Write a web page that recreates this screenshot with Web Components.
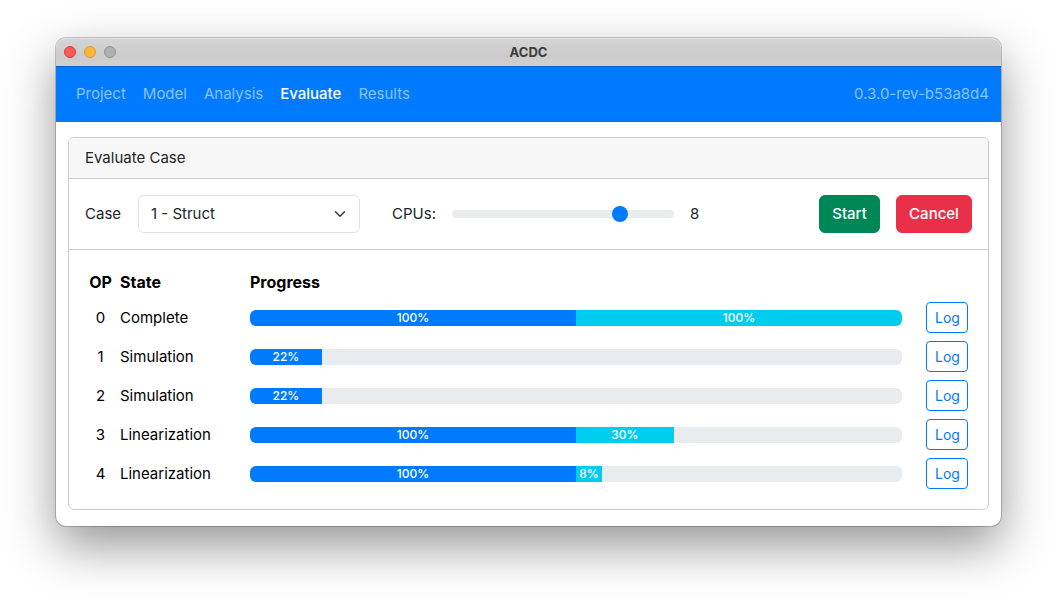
<!DOCTYPE html>
<html lang="en">
<head>
<meta charset="utf-8">
<meta name="viewport" content="width=device-width, initial-scale=1">
<title>ACDC</title>
<style>
  :root {
    --blue: #007aff;
    --cyan: #00ccf0;
    --green: #008757;
    --red: #ea3049;
    --track: #e8ecef;
    --line: #cbcbcb;
    --ink: #212529;
  }
  * { box-sizing: border-box; }
  body {
    margin: 0;
    padding: 38px 56px 72px;
    background: #fff;
    color: var(--ink);
    font: 15px/24px Inter, "Liberation Sans", sans-serif;
  }
</style>
</head>
<body>
<app-window heading="ACDC">
  <nav-bar version="0.3.0-rev-b53a8d4">
    <nav-item>Project</nav-item>
    <nav-item>Model</nav-item>
    <nav-item>Analysis</nav-item>
    <nav-item active>Evaluate</nav-item>
    <nav-item>Results</nav-item>
  </nav-bar>
  <app-card>
    <span slot="header">Evaluate Case</span>
    <case-form slot="controls"></case-form>
    <op-table></op-table>
  </app-card>
</app-window>

<script>
  const define = (name, html, setup) => {
    const template = document.createElement('template');
    template.innerHTML = '<style>*{box-sizing:border-box}</style>' + html;
    customElements.define(name, class extends HTMLElement {
      connectedCallback() {
        if (this.shadowRoot) return;
        const root = this.attachShadow({ mode: 'open' });
        root.append(template.content.cloneNode(true));
        if (setup) setup(this, root);
      }
    });
  };

  define('app-window', `
    <style>
      :host {
        display: block;
        border-radius: 10px;
        background: #fff;
        box-shadow: 0 0 0 1px rgba(0,0,0,.2), 0 20px 50px rgba(0,0,0,.42);
      }
      header {
        display: grid;
        grid-template-columns: 1fr auto 1fr;
        align-items: center;
        height: 28px;
        padding: 0 8px;
        border-radius: 10px 10px 0 0;
        background: linear-gradient(#d5d5d5, #cbcbcb 60%, #d0d0d0);
        box-shadow: inset 0 1px #e2e2e2;
      }
      .lights { display: flex; gap: 8px; }
      .lights button {
        width: 12px; height: 12px; padding: 0;
        border: 1px solid #e0383e; border-radius: 50%;
        background: #ff5a5a;
      }
      .lights .min { background: #ffb43c; border-color: #e09a2b; }
      .lights .max { background: #b0b0b0; border-color: #929292; }
      h1 { margin: 0; font-size: 13px; line-height: 16px; font-weight: 700; color: #3c3c3c; }
      main { padding: 15px 12px 16px; }
    </style>
    <header>
      <div class="lights">
        <button aria-label="Close"></button>
        <button class="min" aria-label="Minimize"></button>
        <button class="max" aria-label="Zoom" disabled></button>
      </div>
      <h1></h1>
    </header>
    <slot name="nav"></slot>
    <main><slot></slot></main>`,
    (host, root) => {
      root.querySelector('h1').textContent = host.getAttribute('heading');
      host.querySelector('nav-bar').slot = 'nav';
    });

  define('nav-bar', `
    <style>
      :host { display: block; }
      nav {
        display: flex; align-items: center; justify-content: space-between;
        height: 56px; padding: 0 12px;
        background: var(--blue);
        box-shadow: inset 0 1px #0060cf;
        color: #8cc2ff;
      }
      .items { display: flex; gap: 1px; }
    </style>
    <nav><div class="items"><slot></slot></div><span class="version"></span></nav>`,
    (host, root) => { root.querySelector('.version').textContent = host.getAttribute('version'); });

  define('nav-item', `
    <style>
      :host { display: block; }
      a { display: block; padding: 8px; color: #8cc2ff; text-decoration: none; }
      :host([active]) a { color: #fff; font-weight: 500; }
    </style>
    <a href="#"><slot></slot></a>`);

  define('app-card', `
    <style>
      :host { display: block; border: 1px solid var(--line); border-radius: 6px; background: #fff; }
      .header { padding: 8px 16px; background: #f7f7f7; border-radius: 5px 5px 0 0; }
      .header, .controls { border-bottom: 1px solid var(--line); }
      .controls, .body { padding: 16px; }
    </style>
    <div class="header"><slot name="header"></slot></div>
    <div class="controls"><slot name="controls"></slot></div>
    <div class="body"><slot></slot></div>`);

  define('app-button', `
    <style>
      :host { display: block; }
      button {
        display: block; width: 100%; padding: 6px 12px;
        border: 1px solid transparent; border-radius: 6px;
        color: #fff;
        font: inherit; font-weight: 500; white-space: nowrap;
      }
      :host([variant=success]) button { background: var(--green); border-color: var(--green); }
      :host([variant=danger]) button { background: var(--red); border-color: var(--red); }
      :host([variant=outline]) button {
        padding: 4px 8px; border-color: var(--blue); border-radius: 4px;
        background: #fff; color: var(--blue);
        font-size: 14px; line-height: 21px; font-weight: 400;
      }
    </style>
    <button type="button"><slot></slot></button>`);

  define('case-form', `
    <style>
      :host { display: block; }
      form { display: flex; align-items: center; gap: 16px; }
      label { min-width: 37px; }
      .select { display: grid; flex: 1 1 0; align-items: center; margin-right: 16px; }
      .select > * { grid-area: 1 / 1; }
      select {
        appearance: none; width: 100%; height: 38px; padding: 0 36px 0 12px;
        border: 1px solid #dee2e6; border-radius: 6px;
        background: #fff; color: inherit; font: inherit;
      }
      svg { justify-self: end; width: 16px; height: 12px; margin-right: 12px; pointer-events: none; }
      input {
        appearance: none; flex: 1 1 0; min-width: 0; height: 24px; margin: 0;
        background: transparent;
      }
      input::-webkit-slider-runnable-track { height: 8px; border-radius: 8px; background: var(--track); }
      input::-webkit-slider-thumb {
        appearance: none; width: 16px; height: 16px; margin-top: -4px;
        border-radius: 50%; background: var(--blue);
      }
      output { width: 113px; }
      .start { width: 61px; }
      .cancel { width: 76px; }
    </style>
    <form>
      <label for="case">Case</label>
      <div class="select">
        <select id="case"><option>1 - Struct</option></select>
        <svg viewBox="0 0 16 16" aria-hidden="true"><path fill="none" stroke="#343a40" stroke-linecap="round" stroke-linejoin="round" stroke-width="2" d="m2 5 6 6 6-6"/></svg>
      </div>
      <label for="cpus">CPUs:</label>
      <input id="cpus" type="range" min="1" max="10" value="8">
      <output for="cpus">8</output>
      <app-button class="start" variant="success">Start</app-button>
      <app-button class="cancel" variant="danger">Cancel</app-button>
    </form>`,
    (host, root) => {
      const range = root.querySelector('input');
      range.addEventListener('input', () => { root.querySelector('output').value = range.value; });
    });

  define('stacked-progress', `
    <style>
      :host {
        display: flex; height: 16px; overflow: hidden;
        border-radius: 6px; background: var(--track);
        color: #fff; font-size: 12px; line-height: 16px; font-weight: 500; text-align: center;
      }
      .sim { background: var(--blue); }
      .lin { background: var(--cyan); }
    </style>`,
    (host, root) => {
      for (const kind of ['sim', 'lin']) {
        const value = host.getAttribute(kind);
        if (!value) continue;
        const bar = document.createElement('div');
        bar.className = kind;
        bar.setAttribute('role', 'progressbar');
        bar.setAttribute('aria-valuenow', value);
        bar.style.width = value / 2 + '%';
        bar.textContent = value + '%';
        root.append(bar);
      }
    });

  define('op-table', `
    <style>
      :host { display: block; color: #000; }
      table { width: 100%; table-layout: fixed; border-collapse: collapse; }
      th, td { padding: 4px; text-align: left; vertical-align: middle; }
      th { font-size: 16px; font-weight: 700; font-variation-settings: "opsz" 32; }
      .op { width: 31px; text-align: center; }
      .state { width: 130px; }
      .log { width: 50px; }
      td.progress { padding-right: 20px; }
    </style>
    <table>
      <thead><tr>
        <th class="op">OP</th><th class="state">State</th><th class="progress">Progress</th><th class="log"></th>
      </tr></thead>
      <tbody></tbody>
    </table>`,
    (host, root) => {
      const rows = [
        ['Complete', 100, 100],
        ['Simulation', 22, 0],
        ['Simulation', 22, 0],
        ['Linearization', 100, 30],
        ['Linearization', 100, 8]
      ];
      root.querySelector('tbody').innerHTML = rows.map(([state, sim, lin], op) => `
        <tr>
          <td class="op">${op}</td>
          <td>${state}</td>
          <td class="progress"><stacked-progress sim="${sim}" ${lin ? `lin="${lin}"` : ''}></stacked-progress></td>
          <td><app-button variant="outline">Log</app-button></td>
        </tr>`).join('');
    });
</script>
</body>
</html>
